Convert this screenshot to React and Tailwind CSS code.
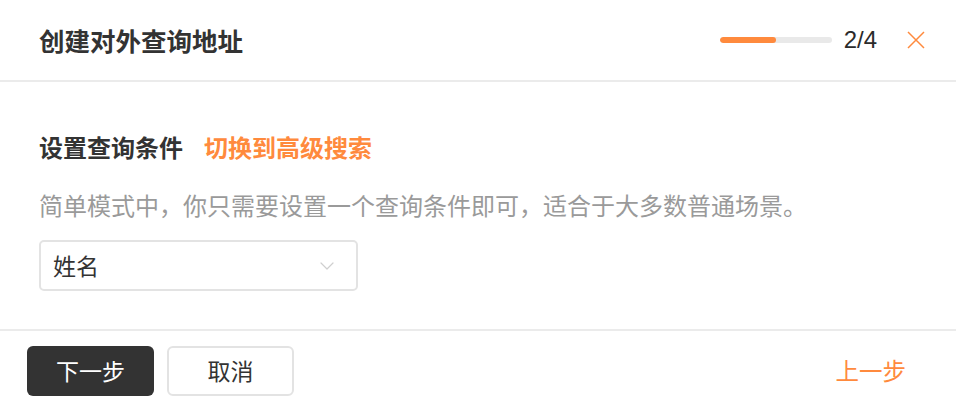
import { ChevronDown } from 'lucide-react';

const App = () => {
  return (
    <div className="w-[956px] h-[410px] bg-white flex flex-col font-['Noto_Sans_CJK_SC',sans-serif] text-[#333]">
      {/* header */}
      <div className="h-[82px] flex items-center pl-[39px] pr-[31px] border-b-2 border-[#ebebeb] shrink-0">
        <h1 className="text-[25.5px] font-semibold leading-none text-[#333]">创建对外查询地址</h1>
        <div className="ml-auto w-[112px] h-[6px] rounded-full bg-[#e9e9e9] overflow-hidden">
          <div className="w-1/2 h-full rounded-full bg-[#ff8a3d]" />
        </div>
        <span className="ml-[12px] text-[24px] leading-none font-['Liberation_Sans',sans-serif] text-[#2b2b2b]">2/4</span>
        <button className="ml-[30px] w-[18px] h-[18px]">
          <svg viewBox="0 0 18 18" className="w-[18px] h-[18px]" fill="none" stroke="#ff8a3d" strokeWidth="1.5">
            <path d="M1 1L17 17M17 1L1 17" />
          </svg>
        </button>
      </div>

      {/* body */}
      <div className="flex-1 pl-[39px] flex flex-col">
        <div className="mt-[49px] h-[32px] flex items-center">
          <span className="text-[24px] font-bold text-[#333]">设置查询条件</span>
          <span className="ml-[21px] text-[24px] font-bold text-[#ff8a3d]">切换到高级搜索</span>
        </div>
        <p className="mt-[26px] h-[32px] flex items-center text-[24px] text-[#9a9a9a]">
          简单模式中，你只需要设置一个查询条件即可，适合于大多数普通场景。
        </p>
        <div className="mt-[19px] w-[319px] h-[51px] border-2 border-[#e3e3e3] rounded-[5px] flex items-center pl-[12px] pr-[17px]">
          <span className="text-[23px] text-[#333]">姓名</span>
          <ChevronDown className="ml-auto text-[#cfcfcf]" size={24} strokeWidth={1.2} />
        </div>
      </div>

      {/* footer */}
      <div className="h-[81px] border-t-2 border-[#ebebeb] flex items-center pl-[27px] pr-[50px] shrink-0">
        <button className="w-[127px] h-[50px] rounded-[6px] bg-[#333] text-white text-[23px]">下一步</button>
        <button className="ml-[13px] w-[127px] h-[50px] rounded-[6px] border-2 border-[#e3e3e3] bg-white text-[#333] text-[23px]">取消</button>
        <button className="ml-auto text-[23.5px] text-[#ff8a3d]">上一步</button>
      </div>
    </div>
  );
};

export default App;
